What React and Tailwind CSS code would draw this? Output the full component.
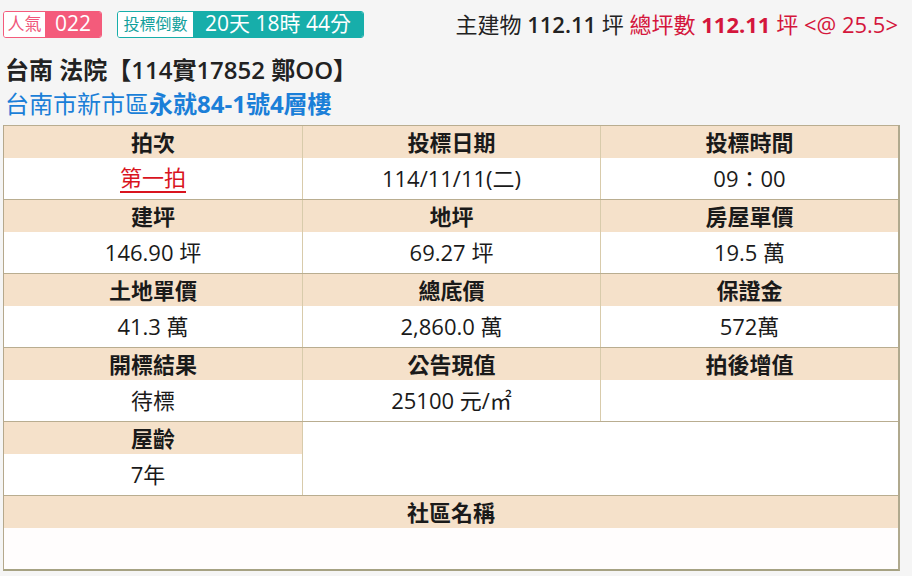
import React from 'react';

const font = { fontFamily: '"Open Sans", "Noto Sans CJK TC", sans-serif' };

const rows = [
  [
    { label: '拍次', value: '第一拍', red: true },
    { label: '投標日期', value: '114/11/11(二)' },
    { label: '投標時間', value: '09：00' },
  ],
  [
    { label: '建坪', value: '146.90 坪' },
    { label: '地坪', value: '69.27 坪' },
    { label: '房屋單價', value: '19.5 萬' },
  ],
  [
    { label: '土地單價', value: '41.3 萬' },
    { label: '總底價', value: '2,860.0 萬' },
    { label: '保證金', value: '572萬' },
  ],
  [
    { label: '開標結果', value: '待標' },
    { label: '公告現值', value: '25100 元/㎡' },
    { label: '拍後增值', value: '' },
  ],
];

const Cell = ({ label, value, red, first }) => (
  <div className={first ? 'flex flex-col' : 'flex flex-col border-l border-[#d8cbab]'}>
    <div className="h-[32px] bg-[#f5e1ca] flex items-center justify-center text-[22px] font-bold text-[#1a1a1a]">
      {label}
    </div>
    <div className="h-[41px] bg-white flex items-center justify-center text-[22px] text-[#1a1a1a]">
      {red ? (
        <span className="text-[#d9141e] border-b-2 border-[#d9141e] leading-[27px]">{value}</span>
      ) : (
        value
      )}
    </div>
  </div>
);

export default function App() {
  return (
    <div className="w-[912px] h-[576px] bg-[#f5f5f5] overflow-hidden" style={font}>
      <div className="flex items-center h-[28px] mt-[10px] pl-[3px] pr-[14px]">
        <div className="flex h-[27px] rounded-[3px] border border-[#f45b7b] overflow-hidden">
          <span className="w-[41px] bg-white text-[#f0577a] text-[17px] flex items-center justify-center">人氣</span>
          <span className="w-[56px] bg-[#f45b7b] text-white text-[21px] flex items-center justify-center">022</span>
        </div>
        <div className="flex h-[27px] ml-[15px] rounded-[3px] border border-[#17aeaa] overflow-hidden">
          <span className="w-[75px] bg-white text-[#12a09c] text-[16px] flex items-center justify-center">投標倒數</span>
          <span className="w-[170px] bg-[#17aeaa] text-white text-[21px] flex items-center justify-center">20天 18時 44分</span>
        </div>
        <div className="ml-auto text-[22px] text-[#222] whitespace-nowrap">
          主建物 <span className="font-semibold">112.11</span> 坪{' '}
          <span className="text-[#d4163c]">
            總坪數 <span className="font-bold">112.11</span> 坪 &lt;@ 25.5&gt;
          </span>
        </div>
      </div>

      <div className="pl-[5px] mt-[16px] text-[24px] leading-[32px] text-[#222] font-semibold">
        台南 法院【114實17852 鄭OO】
      </div>
      <div className="pl-[5px] mt-[2px] text-[24px] leading-[32px] text-[#1b7fd8]">
        台南市新市區<span className="font-bold">永就84-1號4層樓</span>
      </div>

      <div className="ml-[3px] mt-[5px] w-[897px] border-l border-r-2 border-b-2 border-l-[#b5a88c] border-r-[#b0a98e] border-b-[#a6a283]">
        {rows.map((r, i) => (
          <div key={i} className="grid grid-cols-3 border-t border-[#b9ad90]">
            {r.map((c, j) => (
              <Cell key={j} {...c} first={j === 0} />
            ))}
          </div>
        ))}
        <div className="grid grid-cols-3 border-t border-[#b9ad90]">
          <div className="flex flex-col">
            <div className="h-[32px] bg-[#f5e1ca] flex items-center justify-center text-[22px] font-bold text-[#1a1a1a]">屋齡</div>
            <div className="h-[41px] bg-white flex items-center justify-center pr-[10px] text-[22px] text-[#1a1a1a]">7年</div>
          </div>
          <div className="col-span-2 bg-white border-l border-[#d8cbab]"></div>
        </div>
        <div className="border-t border-[#b9ad90]">
          <div className="h-[32px] bg-[#f5e1ca] flex items-center justify-center text-[22px] font-bold text-[#1a1a1a]">社區名稱</div>
          <div className="h-[41px] bg-[#fffdfd]"></div>
        </div>
      </div>
    </div>
  );
}
